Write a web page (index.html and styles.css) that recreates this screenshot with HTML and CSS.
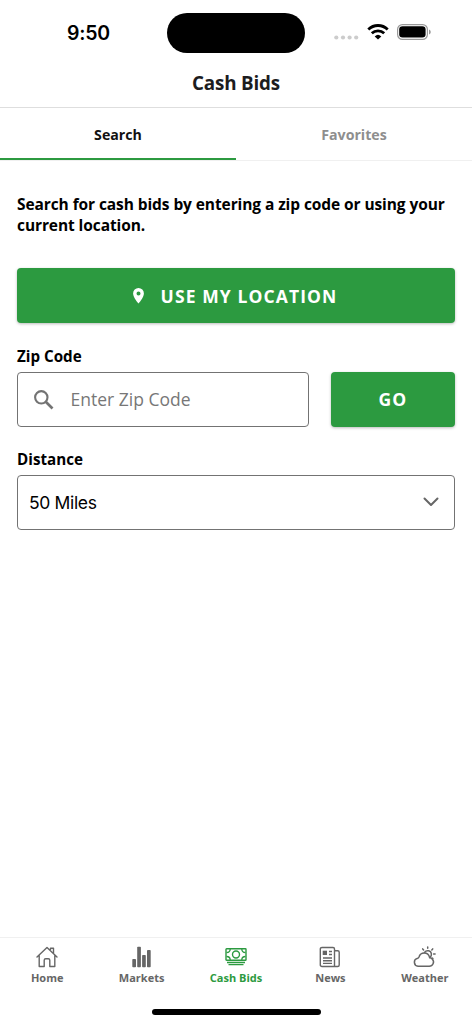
FILE: index.html
```html
<!DOCTYPE html>
<html lang="en">
<head>
<meta charset="utf-8">
<title>Cash Bids</title>
<link rel="stylesheet" href="styles.css">
</head>
<body>
<div class="app">
  <div class="status">
    <div class="clock">9:50</div>
    <div class="island"></div>
    <div class="indicators">
      <svg class="signal" width="25" height="5" viewBox="0 0 25 5" fill="#ccc"><circle cx="2.3" cy="2.5" r="2.1"/><circle cx="9" cy="2.5" r="2.1"/><circle cx="15.6" cy="2.5" r="2.1"/><circle cx="22.2" cy="2.5" r="2.1"/></svg>
      <svg class="wifi" width="22" height="16" viewBox="0 0 22 16" fill="none" stroke="#000" stroke-width="2.8"><path d="M1.3 5.4a14 14 0 0 1 19.4 0"/><path d="M4.8 9.3a9 9 0 0 1 12.4 0"/><path d="M11 15.6L7.7 12.4a4.8 4.8 0 0 1 6.6 0z" fill="#000" stroke="none"/></svg>
      <svg class="battery" width="35" height="16" viewBox="0 0 35 16"><rect x=".6" y=".6" width="29.8" height="14.8" rx="4.8" fill="none" stroke="#999" stroke-width="1.2"/><rect x="2.2" y="2.3" width="26.4" height="11.2" rx="3.3"/><path d="M32 5.5c2.3.7 2.3 4.300 0 5z" fill="#999"/></svg>
    </div>
  </div>
  <header class="title">Cash Bids</header>
  <nav class="tabs"><div class="tab active">Search</div><div class="tab">Favorites</div></nav>
  <main class="content">
    <p class="intro">Search for cash bids by entering a zip code or using your current location.</p>
    <button class="button locate">
      <svg width="11" height="16" viewBox="0 0 11 16" fill="#fff"><path fill-rule="evenodd" d="M5.500 0A5.400 5.400 0 0 0 .1 5.400C.1 9.400 5.500 15.500 5.500 15.500S10.900 9.400 10.900 5.400A5.400 5.400 0 0 0 5.500 0zm0 3.500a2 2 0 1 1 0 4 2 2 0 0 1 0-4z"/></svg>
      <span>USE MY LOCATION</span>
    </button>
    <div class="label">Zip Code</div>
    <div class="zip-row">
      <div class="field zip">
        <svg width="20" height="20" viewBox="0 0 20 20" fill="none" stroke="#737373" stroke-width="2.1"><circle cx="7.300" cy="7.300" r="6.200"/><path d="M12 12l6.500 6.500" stroke-width="2.700"/></svg>
        <span>Enter Zip Code</span>
      </div>
      <button class="button go">GO</button>
    </div>
    <div class="label distance-label">Distance</div>
    <div class="field select"><span>50 Miles</span>
      <svg width="16" height="10" viewBox="0 0 16 10" fill="none" stroke="#666" stroke-width="2" stroke-linecap="round" stroke-linejoin="round"><path d="M1.500 1.500L8 8l6.500-6.500"/></svg>
    </div>
  </main>
  <footer class="bottom">
    <div class="item">
      <svg width="22" height="22" viewBox="0 0 22 22" fill="none" stroke="#666" stroke-width="1.400" stroke-linecap="round" stroke-linejoin="round"><path d="M1 11L11 1.500 21 11M3.200 9.500v11h5v-6.200c0-1 .5-1.500 1.500-1.500h2.600c1 0 1.500.5 1.500 1.500v6.200h5v-11M14.500 3.500v-1.200h3v5"/></svg>
      <span>Home</span>
    </div>
    <div class="item">
      <svg width="22" height="22" viewBox="0 0 22 22" fill="#666"><rect x="1.300" y="13" width="3.700" height="8.300" rx=".8"/><rect x="6.200" y=".7" width="3.700" height="20.600" rx=".8"/><rect x="11.100" y="9" width="3.700" height="12.300" rx=".8"/><rect x="16" y="4" width="3.700" height="17.300" rx=".8"/></svg>
      <span>Markets</span>
    </div>
    <div class="item current">
      <svg width="22" height="22" viewBox="0 0 22 22" fill="none" stroke="#2c9a40" stroke-width="1.400"><rect x="1" y="2.700" width="20" height="11.600" rx=".6"/><circle cx="11" cy="8.500" r="3.500"/><path d="M1.500 6.500C4 6.500 5.200 5 5.200 3M20.500 6.500c-2.500 0-3.700-1.500-3.700-3.500M1.500 10.500c2.500 0 3.700 1.500 3.700 3.500M20.500 10.500c-2.500 0-3.700 1.500-3.700 3.500M2 16.500h18M3.500 18.600h15" stroke-width="1.300"/></svg>
      <span>Cash Bids</span>
    </div>
    <div class="item">
      <svg width="22" height="22" viewBox="0 0 22 22" fill="none" stroke="#666" stroke-width="1.400" stroke-linejoin="round"><path d="M3 1.500h11c1 0 1.500.5 1.500 1.500v17.500H3c-1 0-1.700-.6-1.700-1.500V3c0-1 .7-1.500 1.700-1.500zM15.500 4.800h3.200c1 0 1.500.6 1.500 1.500V19c0 1-.5 1.500-1.500 1.500h-3.700M10 5.500h3M10 8.500h3M4 12h9M4 14.700h9M4 17.400h9"/><rect x="3.700" y="4.700" width="4.300" height="4.300" fill="#666" stroke="none"/></svg>
      <span>News</span>
    </div>
    <div class="item">
      <svg width="23" height="22" viewBox="0 0 23 22" fill="none" stroke="#666" stroke-width="1.500" stroke-linecap="round"><path d="M5 20.200h11.200a4.200 4.200 0 0 0 3.200-7c-.7-.9-1.600-1.300-2.700-1.400C16 8.800 14 7 11.300 7 8.700 7 6.700 8.500 6 11c-.5 1-1 1.200-1.800 1.400A4 4 0 0 0 5 20.200z"/><path d="M11.500 6.500C13.500 3.500 18 4.500 18.400 8c.1 1.200-.3 2.500-1.300 3.300M14.700 1v1.200M9.700 2.900l.9 1M19.700 2.900l-.9 1M20.600 8h1.500M19.300 12l.6.500"/></svg>
      <span>Weather</span>
    </div>
  </footer>
  <div class="home-indicator"></div>
</div>
</body>
</html>
```
FILE: styles.css
```css
* { box-sizing: border-box; }
body { margin: 0; background: #fff; font-family: "Open Sans", "Noto Sans", sans-serif; color: #000; }
.app { width: 472px; height: 1024px; display: flex; flex-direction: column; }
svg { display: block; flex: none; }
.status { height: 65px; display: flex; padding-top: 13px; }
.clock { width: 167px; padding: 5px 0 0 67px; font: 600 19.500px/31px Inter, sans-serif; letter-spacing: -0.2px; }
.island { width: 138px; height: 40px; border-radius: 20px; background: #000; }
.indicators { display: flex; align-items: flex-start; padding-left: 29px; }
.signal { margin-top: 22px; }
.wifi { margin: 11px 0 0 8px; }
.battery { margin: 11px 0 0 8px; }
.title { height: 43px; border-bottom: 1px solid #dedede; text-align: center; font-size: 18.800px; font-weight: 700; letter-spacing: -0.15px; line-height: 37px; color: #1c1c1e; }
.tabs { display: flex; height: 53px; border-bottom: 1px solid #f0f0f0; }
.tab { width: 236px; height: 52px; text-align: center; font-size: 14.200px; font-weight: 700; line-height: 53px; color: #8e8e8e; }
.tab.active { color: #111; border-bottom: 2px solid #2c9a40; }
.content { flex: 1; padding: 33px 17px 0; }
.intro { margin: 0 0 32px; font-size: 15.500px; font-weight: 700; letter-spacing: -0.09px; line-height: 21px; }
.button { border: 0; border-radius: 4px; background: #2c9a40; color: #fff; font: 700 17.500px/55px "Open Sans", sans-serif; letter-spacing: 1.100px; box-shadow: 0 1px 3px #0004; padding: 0; }
.locate { width: 438px; height: 55px; display: flex; justify-content: center; align-items: center; gap: 17px; line-height: 56px; padding-right: 2px; }
.label { margin-top: 22px; font-size: 15.200px; font-weight: 700; line-height: 22px; }
.zip-row { display: flex; gap: 22px; margin-top: 5px; }
.field { height: 55px; border: 1px solid #737373; border-radius: 4px; display: flex; align-items: center; }
.zip { width: 292px; padding: 0 0 2px 16px; gap: 16.500px; font-size: 17.500px; color: #777; }
.zip svg { margin-top: 2px; }
.go { width: 124px; height: 55px; }
.distance-label { margin-top: 21px; }
.select { width: 438px; margin-top: 5px; padding: 0 15px 0 11px; justify-content: space-between; font: 17.500px Inter, sans-serif; letter-spacing: -0.35px; }
.select svg { margin-bottom: 1px; }
.bottom { height: 58px; border-top: 1px solid #f0f0f0; display: grid; grid-template-columns: repeat(5, 1fr); }
.item { display: flex; flex-direction: column; align-items: center; padding-top: 8px; font-size: 11px; font-weight: 700; line-height: 18px; gap: 1px; color: #666; }
.current { color: #2c9a40; }
.home-indicator { width: 169px; height: 6px; border-radius: 3px; background: #000; margin: 14px auto 9px; }
```
